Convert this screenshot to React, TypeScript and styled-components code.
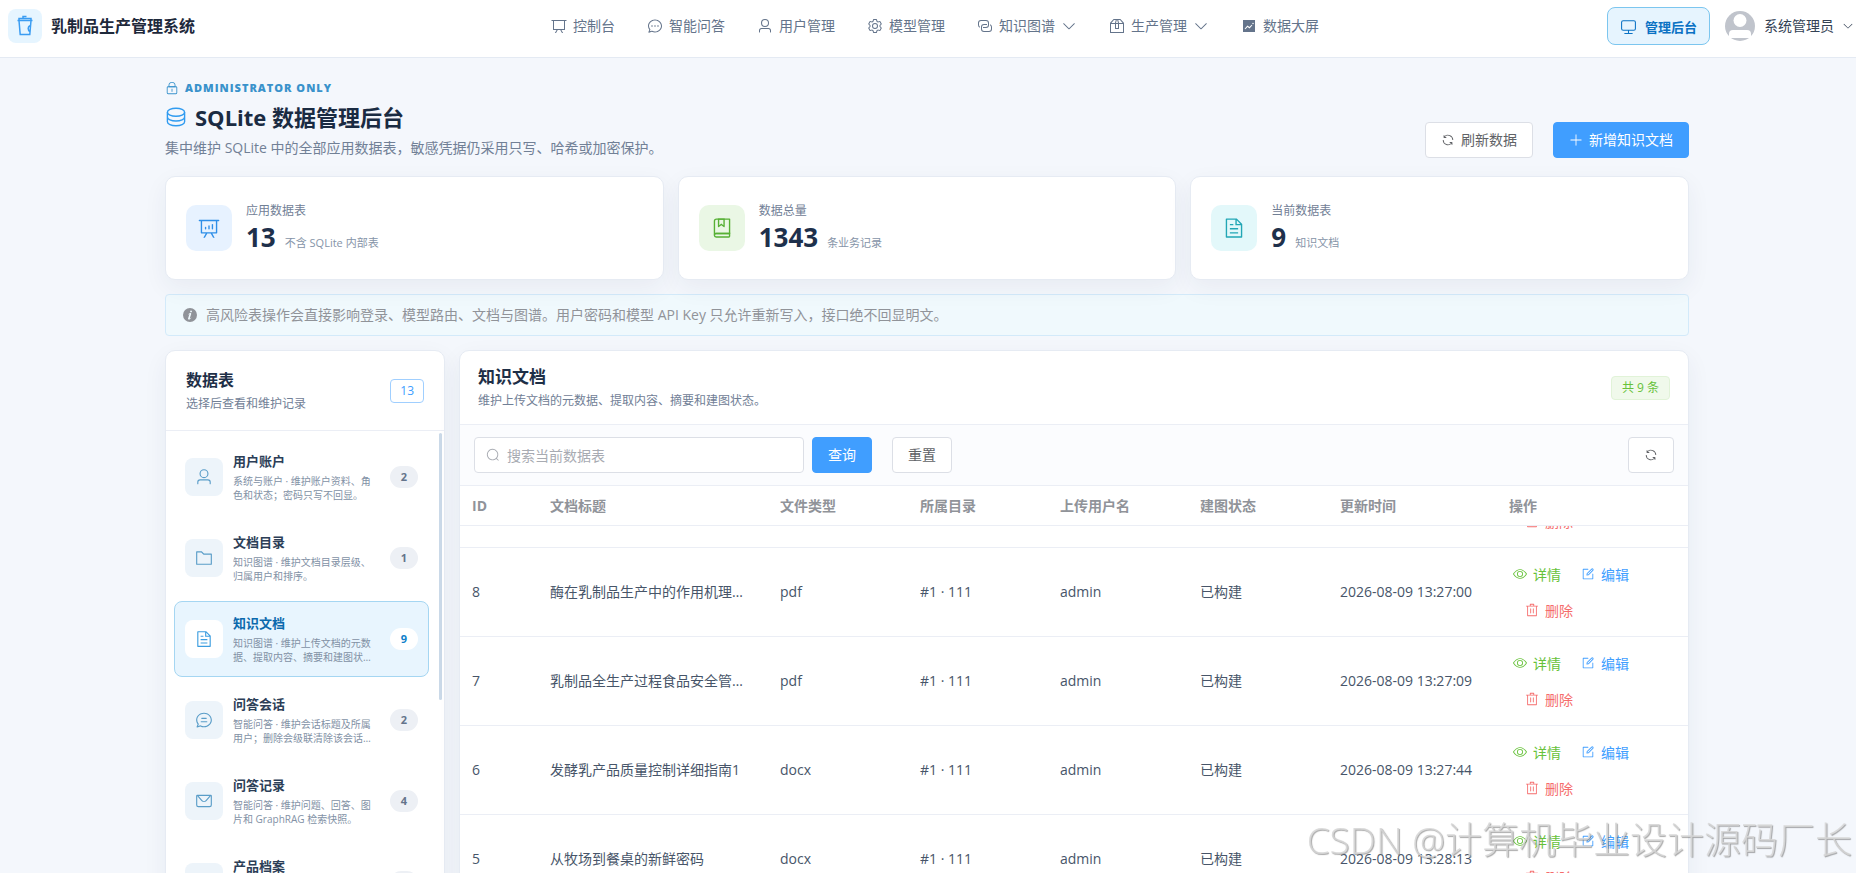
import React, { useLayoutEffect, useRef } from 'react';
import styled, { createGlobalStyle, css } from 'styled-components';

const GlobalStyle = createGlobalStyle`
  *, *::before, *::after { box-sizing: border-box; }
  body {
    margin: 0;
    background: #f4f7fc;
    color: #1f2d3d;
    font-family: "Open Sans", "Noto Sans CJK SC", sans-serif;
    font-size: 14px;
  }
  button, input { font-family: inherit; }
  h1, h2, p { margin: 0; }
`;

/* ---------- icons (1024 grid) ---------- */

const paths = {
  arrowDown: ['M831.872 340.864 512 652.672 192.128 340.864a30.592 30.592 0 0 0-42.752 0 29.12 29.12 0 0 0 0 41.6L489.664 714.24a32 32 0 0 0 44.672 0l340.288-331.712a29.12 29.12 0 0 0 0-41.728 30.592 30.592 0 0 0-42.752 0z'],
  plus: ['M480 480V128a32 32 0 0 1 64 0v352h352a32 32 0 1 1 0 64H544v352a32 32 0 1 1-64 0V544H128a32 32 0 0 1 0-64z'],
  search: ['m795.904 750.72 124.992 124.928a32 32 0 0 1-45.248 45.248L750.656 795.904a416 416 0 1 1 45.248-45.248zM480 832a352 352 0 1 0 0-704 352 352 0 0 0 0 704'],
  refresh: ['M771.776 794.88A384 384 0 0 1 128 512h64a320 320 0 0 0 555.712 216.448H654.72a32 32 0 1 1 0-64h149.056a32 32 0 0 1 32 32v148.928a32 32 0 1 1-64 0v-50.56zM276.288 295.616h92.992a32 32 0 0 1 0 64H220.16a32 32 0 0 1-32-32V178.56a32 32 0 0 1 64 0v50.56A384 384 0 0 1 896.128 512h-64a320 320 0 0 0-555.776-216.384z'],
  trash: ['M160 256H96a32 32 0 0 1 0-64h256V95.936a32 32 0 0 1 32-32h256a32 32 0 0 1 32 32V192h256a32 32 0 1 1 0 64h-64v672a32 32 0 0 1-32 32H192a32 32 0 0 1-32-32zm448-64v-64H416v64zM224 896h576V256H224zm192-128a32 32 0 0 1-32-32V416a32 32 0 0 1 64 0v320a32 32 0 0 1-32 32m192 0a32 32 0 0 1-32-32V416a32 32 0 0 1 64 0v320a32 32 0 0 1-32 32'],
  view: ['M512 160c320 0 512 352 512 352S832 864 512 864 0 512 0 512s192-352 512-352m0 64c-225.28 0-384.128 208.064-436.8 288 52.608 79.872 211.456 288 436.8 288 225.28 0 384.128-208.064 436.8-288-52.608-79.872-211.456-288-436.8-288m0 64a224 224 0 1 1 0 448 224 224 0 0 1 0-448m0 64a160.192 160.192 0 0 0-160 160c0 88.192 71.744 160 160 160s160-71.808 160-160-71.744-160-160-160'],
  edit: [
    'M832 512a32 32 0 1 1 64 0v352a32 32 0 0 1-32 32H160a32 32 0 0 1-32-32V160a32 32 0 0 1 32-32h352a32 32 0 0 1 0 64H192v640h640z',
    'm469.952 554.24 52.8-7.552L847.104 222.4a32 32 0 1 0-45.248-45.248L477.44 501.44l-7.552 52.8zm422.4-422.4a96 96 0 0 1 0 135.808l-331.84 331.84a32 32 0 0 1-18.112 9.088L436.8 623.68a32 32 0 0 1-36.224-36.224l15.104-105.6a32 32 0 0 1 9.024-18.112l331.904-331.84a96 96 0 0 1 135.744 0z',
  ],
  user: ['M512 512a192 192 0 1 0 0-384 192 192 0 0 0 0 384m0 64a256 256 0 1 1 0-512 256 256 0 0 1 0 512m320 320v-96a96 96 0 0 0-96-96H288a96 96 0 0 0-96 96v96a32 32 0 1 1-64 0v-96a160 160 0 0 1 160-160h448a160 160 0 0 1 160 160v96a32 32 0 1 1-64 0'],
  folder: ['M128 192v640h768V320H485.76L357.504 192zm-32-64h287.872l128.384 128H928a32 32 0 0 1 32 32v576a32 32 0 0 1-32 32H96a32 32 0 0 1-32-32V160a32 32 0 0 1 32-32'],
  document: ['M832 384H576V128H192v768h640zm-26.496-64L640 154.496V320zM160 64h480l256 256v608a32 32 0 0 1-32 32H160a32 32 0 0 1-32-32V96a32 32 0 0 1 32-32m160 448h384v64H320zm0-192h160v64H320zm0 384h384v64H320z'],
  message: [
    'M128 224v512a64 64 0 0 0 64 64h640a64 64 0 0 0 64-64V224zm0-64h768a64 64 0 0 1 64 64v512a128 128 0 0 1-128 128H192A128 128 0 0 1 64 736V224a64 64 0 0 1 64-64',
    'M904 224 656.512 506.88a192 192 0 0 1-289.024 0L120 224zm-698.944 0 210.56 240.704a128 128 0 0 0 192.704 0L818.944 224z',
  ],
  lock: [
    'M224 448a32 32 0 0 0-32 32v384a32 32 0 0 0 32 32h576a32 32 0 0 0 32-32V480a32 32 0 0 0-32-32zm0-64h576a96 96 0 0 1 96 96v384a96 96 0 0 1-96 96H224a96 96 0 0 1-96-96V480a96 96 0 0 1 96-96',
    'M512 544a32 32 0 0 1 32 32v192a32 32 0 1 1-64 0V576a32 32 0 0 1 32-32m192-160v-64a192 192 0 1 0-384 0v64zM512 64a256 256 0 0 1 256 256v128H256V320A256 256 0 0 1 512 64',
  ],
  monitor: ['M544 768v128h192a32 32 0 1 1 0 64H288a32 32 0 1 1 0-64h192V768H192A128 128 0 0 1 64 640V256a128 128 0 0 1 128-128h640a128 128 0 0 1 128 128v384a128 128 0 0 1-128 128zM192 192a64 64 0 0 0-64 64v384a64 64 0 0 0 64 64h640a64 64 0 0 0 64-64V256a64 64 0 0 0-64-64z'],
  chatDot: [
    'm174.72 855.68 135.296-45.12 23.68 11.84C388.096 849.536 448.576 864 512 864c211.84 0 384-166.784 384-352S723.84 160 512 160 128 326.784 128 512c0 69.12 24.96 139.264 70.848 199.232l22.08 28.8-46.272 115.584zm-45.248 82.56A32 32 0 0 1 89.6 896l58.368-145.92C94.72 680.32 64 596.864 64 512 64 299.904 256 96 512 96s448 203.904 448 416-192 416-448 416a461.06 461.06 0 0 1-206.912-48.384z',
    'M512 563.2a51.2 51.2 0 1 1 0-102.4 51.2 51.2 0 0 1 0 102.4m192 0a51.2 51.2 0 1 1 0-102.4 51.2 51.2 0 0 1 0 102.4m-384 0a51.2 51.2 0 1 1 0-102.4 51.2 51.2 0 0 1 0 102.4',
  ],
  chatLine: [
    'm174.72 855.68 135.296-45.12 23.68 11.84C388.096 849.536 448.576 864 512 864c211.84 0 384-166.784 384-352S723.84 160 512 160 128 326.784 128 512c0 69.12 24.96 139.264 70.848 199.232l22.08 28.8-46.272 115.584zm-45.248 82.56A32 32 0 0 1 89.6 896l58.368-145.92C94.72 680.32 64 596.864 64 512 64 299.904 256 96 512 96s448 203.904 448 416-192 416-448 416a461.06 461.06 0 0 1-206.912-48.384z',
    'M352 576h320q32 0 32 32t-32 32H352q-32 0-32-32t32-32m32-192h256q32 0 32 32t-32 32H384q-32 0-32-32t32-32',
  ],
  trend: ['M128 896V128h768v768zm291.712-327.296 128 102.4 180.16-201.792-47.744-42.624-139.84 156.608-128-102.4-180.16 201.792 47.744 42.624 139.84-156.608zM816 352a48 48 0 1 0-96 0 48 48 0 0 0 96 0'],
  info: ['M512 64a448 448 0 1 1 0 896.064A448 448 0 0 1 512 64m67.2 275.072c33.28 0 60.288-23.104 60.288-57.344s-27.072-57.344-60.288-57.344c-33.28 0-60.16 23.104-60.16 57.344s26.88 57.344 60.16 57.344M590.912 699.2c0-6.848 2.368-24.64 1.024-34.752l-52.608 60.544c-10.88 11.456-24.512 19.392-30.912 17.28a12.992 12.992 0 0 1-8.256-14.72l87.68-276.992c7.168-35.136-12.544-67.2-54.336-71.296-44.096 0-108.992 44.736-148.48 101.504 0 6.784-1.28 23.68.064 33.792l52.544-60.608c10.88-11.328 23.552-19.328 29.952-17.152a12.8 12.8 0 0 1 7.808 16.128L388.48 728.576c-10.048 32.256 8.96 63.872 55.04 71.04 67.84 0 107.904-43.648 147.456-100.416z'],
  connection: [
    'M640 384v64H448a128 128 0 0 0-128 128v128a128 128 0 0 0 128 128h320a128 128 0 0 0 128-128V576a128 128 0 0 0-64-110.848V394.88c74.56 26.368 128 97.472 128 181.056v128a192 192 0 0 1-192 192H448a192 192 0 0 1-192-192V576a192 192 0 0 1 192-192z',
    'M384 640v-64h192a128 128 0 0 0 128-128V320a128 128 0 0 0-128-128H256a128 128 0 0 0-128 128v128a128 128 0 0 0 64 110.848v70.272A192.06 192.06 0 0 1 64 448V320a192 192 0 0 1 192-192h320a192 192 0 0 1 192 192v128a192 192 0 0 1-192 192z',
  ],
  collection: [
    'M192 736h640V128H256a64 64 0 0 0-64 64zm64-672h608a32 32 0 0 1 32 32v672a32 32 0 0 1-32 32H160l-32 57.536V192A128 128 0 0 1 256 64',
    'M240 800a48 48 0 1 0 0 96h592v-96zm0-64h656v160a64 64 0 0 1-64 64H240a112 112 0 0 1 0-224m144-608v250.88l96-76.8 96 76.8V128zm-64-64h320v381.44a32 32 0 0 1-51.968 24.96L480 384l-108.032 86.4A32 32 0 0 1 320 445.44z',
  ],
  analysis: ['m665.216 768 110.848 192h-73.856L591.36 768H433.024L322.176 960H248.32l110.848-192H160a32 32 0 0 1-32-32V192H64a32 32 0 0 1 0-64h896a32 32 0 1 1 0 64h-64v544a32 32 0 0 1-32 32zM832 192H192v512h640zM352 448a32 32 0 0 1 32 32v64a32 32 0 0 1-64 0v-64a32 32 0 0 1 32-32m160-64a32 32 0 0 1 32 32v128a32 32 0 0 1-64 0V416a32 32 0 0 1 32-32m160-64a32 32 0 0 1 32 32v192a32 32 0 1 1-64 0V352a32 32 0 0 1 32-32'],
  board: [
    'M32 128h960v64H32z',
    'M192 192v512h640V192zm-64-64h768v608a32 32 0 0 1-32 32H160a32 32 0 0 1-32-32z',
    'M322.176 960H248.32l144.64-250.56 55.424 32zm453.888 0h-73.856L576 741.44l55.424-32z',
  ],
  box: [
    'M317.056 128 128 344.064V896h768V344.064L706.944 128zm-14.528-64h418.944a32 32 0 0 1 24.064 10.88l206.528 236.096A32 32 0 0 1 960 332.032V928a32 32 0 0 1-32 32H96a32 32 0 0 1-32-32V332.032a32 32 0 0 1 7.936-21.12L278.4 75.008A32 32 0 0 1 302.528 64z',
    'M64 320h896v64H64z',
    'M448 327.872V640h128V327.872L526.08 128h-28.16zM448 64h128l64 256v352a32 32 0 0 1-32 32H416a32 32 0 0 1-32-32V320z',
  ],
  setting: ['M600.704 64a32 32 0 0 1 30.464 22.208l35.2 109.376c14.784 7.232 28.928 15.36 42.432 24.512l112.384-24.192a32 32 0 0 1 34.432 15.36L944.32 364.8a32 32 0 0 1-4.032 37.504l-77.12 85.12a357.12 357.12 0 0 1 0 49.024l77.12 85.248a32 32 0 0 1 4.032 37.504l-88.704 153.6a32 32 0 0 1-34.432 15.296L708.8 803.904c-13.44 9.088-27.648 17.28-42.368 24.512l-35.264 109.376A32 32 0 0 1 600.704 960H423.296a32 32 0 0 1-30.464-22.208L357.696 828.48a351.616 351.616 0 0 1-42.56-24.64l-112.32 24.256a32 32 0 0 1-34.432-15.36L79.68 659.2a32 32 0 0 1 4.032-37.504l77.12-85.248a357.12 357.12 0 0 1 0-48.896l-77.12-85.248A32 32 0 0 1 79.68 364.8l88.704-153.6a32 32 0 0 1 34.432-15.296l112.32 24.256c13.568-9.152 27.776-17.408 42.56-24.64l35.2-109.312A32 32 0 0 1 423.232 64H600.64zm-23.424 64H446.72l-36.352 113.088-24.512 11.968a294.113 294.113 0 0 0-34.816 20.096l-22.656 15.36-116.224-25.088-65.28 113.152 79.68 88.192-1.92 27.136a293.12 293.12 0 0 0 0 40.192l1.92 27.136-79.808 88.192 65.344 113.152 116.224-25.024 22.656 15.296a294.113 294.113 0 0 0 34.816 20.096l24.512 11.968L446.72 896h130.688l36.48-113.152 24.448-11.904a288.282 288.282 0 0 0 34.752-20.096l22.592-15.296 116.288 25.024 65.28-113.152-79.744-88.192 1.92-27.136a293.12 293.12 0 0 0 0-40.256l-1.92-27.136 79.808-88.128-65.344-113.152-116.288 24.96-22.592-15.232a287.616 287.616 0 0 0-34.752-20.096l-24.448-11.904L577.344 128zM512 320a192 192 0 1 1 0 384 192 192 0 0 1 0-384m0 64a128 128 0 1 0 0 256 128 128 0 0 0 0-256'],
};

type IconName = keyof typeof paths;

const IconSvg = styled.svg<{ $size: number }>`
  width: ${(p) => p.$size}px;
  height: ${(p) => p.$size}px;
  flex: none;
  display: block;
`;

function Icon({ name, size = 14 }: { name: IconName; size?: number }) {
  return (
    <IconSvg $size={size} viewBox="0 0 1024 1024" fill="currentColor" aria-hidden="true">
      {paths[name].map((d) => <path key={d} d={d} />)}
    </IconSvg>
  );
}

function DatabaseIcon() {
  return (
    <IconSvg $size={22} viewBox="0 0 22 22" fill="none" stroke="#2f9bf0" strokeWidth="1.400" aria-hidden="true">
      <ellipse cx="11" cy="6.200" rx="8.600" ry="4" />
      <path d="M2.400 6.200v9.600c0 2.200 3.800 4 8.600 4s8.600-1.800 8.600-4V6.200 M2.400 11c0 2.200 3.800 4 8.600 4s8.600-1.800 8.600-4" />
    </IconSvg>
  );
}

function CupIcon() {
  return (
    <IconSvg $size={22} viewBox="0 0 22 22" fill="none" stroke="#3b9df2" strokeWidth="1.500" aria-hidden="true">
      <path d="M3.500 5.500h15 M5 5.500 6.200 19.500h9.600L17 5.500 M5 5.500V3.500h12v2 M9 3.500V1.500h3.500 M15.800 10.500a3.600 3.600 0 0 0 0 6" />
    </IconSvg>
  );
}

/* ---------- top bar ---------- */

const Shell = styled.div`
  height: 100vh;
  display: flex;
  flex-direction: column;
  overflow: hidden;
`;

const TopBar = styled.header`
  flex: none;
  display: flex;
  align-items: center;
  padding: 7px 2px 12px 8px;
  background: #fff;
  border-bottom: 1px solid #e4eaf3;
`;

const Side = styled.div<{ $end?: boolean }>`
  flex: 1;
  display: flex;
  align-items: center;
  justify-content: ${(p) => (p.$end ? 'flex-end' : 'flex-start')};
`;

const LogoBox = styled.span`
  display: flex;
  align-items: center;
  justify-content: center;
  width: 34px;
  height: 34px;
  margin-right: 9px;
  border-radius: 8px;
  background: #e6f5ff;
`;

const Brand = styled.strong`
  font-size: 16px;
  line-height: 24px;
  color: #1e293b;
`;

const Nav = styled.nav`
  display: flex;
  align-items: center;
  gap: 32px;
  padding-left: 8px;
`;

const NavLink = styled.a`
  display: flex;
  align-items: center;
  gap: 6px;
  color: #64748b;
  font-size: 14px;
  line-height: 20px;
  text-decoration: none;
`;

const AdminButton = styled.button`
  display: flex;
  align-items: center;
  gap: 8px;
  height: 38px;
  padding: 0 12px;
  border: 1px solid #7cc6ef;
  border-radius: 8px;
  background: #e6f4fe;
  color: #0b72c4;
  font-size: 13px;
  font-weight: 700;
`;

const Avatar = styled.svg`
  width: 30px;
  height: 30px;
  margin: 0 9px 0 15px;
`;

const AccountButton = styled.button`
  display: flex;
  align-items: center;
  gap: 8px;
  padding: 0;
  border: 0;
  background: none;
  color: #334155;
  font-size: 14px;
  line-height: 20px;
`;

/* ---------- page ---------- */

const Main = styled.main`
  flex: 1;
  min-height: 0;
  overflow-y: auto;
  scrollbar-width: none;
  padding: 22px 24px 24px 22px;
`;

const Container = styled.div`
  max-width: 1524px;
  margin: 0 auto;
`;

const Hero = styled.section`
  display: flex;
  align-items: flex-end;
  justify-content: space-between;
  margin-bottom: 18px;
`;

const Eyebrow = styled.p`
  display: flex;
  align-items: center;
  gap: 6px;
  color: #3992cb;
  font-size: 11px;
  font-weight: 800;
  line-height: 16px;
  letter-spacing: 1px;
`;

const PageTitle = styled.h1`
  display: flex;
  align-items: center;
  gap: 8px;
  margin: 6px 0;
  color: #1a2b42;
  font-size: 22px;
  font-weight: 700;
  line-height: 30px;
`;

const Lead = styled.p`
  color: #718096;
  font-size: 14px;
  line-height: 20px;
`;

const Actions = styled.div`
  display: flex;
  gap: 20px;
`;

const Button = styled.button<{ $primary?: boolean }>`
  display: inline-flex;
  align-items: center;
  justify-content: center;
  gap: 6px;
  height: 36px;
  padding: 0 15px;
  border: 1px solid ${(p) => (p.$primary ? '#409eff' : '#dcdfe6')};
  border-radius: 4px;
  background: ${(p) => (p.$primary ? '#409eff' : '#fff')};
  color: ${(p) => (p.$primary ? '#fff' : '#606266')};
  font-size: 14px;
  line-height: 20px;
  flex: none;
`;

const surface = css`
  border: 1px solid #e6ebf3;
  border-radius: 10px;
  background: #fff;
  box-shadow: 0 8px 24px rgba(31, 50, 81, 0.06);
`;

const Stats = styled.section`
  display: grid;
  grid-template-columns: repeat(3, 1fr);
  gap: 14px;
`;

const StatCard = styled.article`
  ${surface}
  display: flex;
  align-items: center;
  gap: 14px;
  height: 104px;
  padding: 0 20px;
`;

const StatIcon = styled.span<{ $bg: string; $fg: string }>`
  display: flex;
  align-items: center;
  justify-content: center;
  width: 46px;
  height: 46px;
  border-radius: 10px;
  background: ${(p) => p.$bg};
  color: ${(p) => p.$fg};
`;

const StatLabel = styled.p`
  color: #718096;
  font-size: 12px;
  line-height: 18px;
`;

const StatLine = styled.p`
  display: flex;
  align-items: baseline;
  gap: 9px;
  color: #1e304b;
  line-height: 34px;
  strong { font-size: 26px; }
  small { color: #8694a8; font-size: 11px; line-height: 16px; }
`;

const Notice = styled.div`
  display: flex;
  align-items: center;
  gap: 8px;
  height: 42px;
  margin: 14px 0;
  padding: 0 16px;
  border: 1px solid #d3eafa;
  border-radius: 4px;
  background: #f0f9fd;
  color: #909399;
  font-size: 14px;
  line-height: 20px;
`;

const Workspace = styled.div`
  display: grid;
  grid-template-columns: 280px minmax(0, 1fr);
  align-items: start;
  gap: 14px;
`;

const Panel = styled.section`
  ${surface}
  position: relative;
  overflow: hidden;
`;

const PanelHead = styled.header<{ $tall?: boolean }>`
  display: flex;
  align-items: center;
  justify-content: space-between;
  height: ${(p) => (p.$tall ? 80 : 74)}px;
  padding: 0 ${(p) => (p.$tall ? 20 : 18)}px;
  border-bottom: 1px solid #ebeef5;
`;

const PanelTitle = styled.h2<{ $large?: boolean }>`
  color: #1e2f47;
  font-size: ${(p) => (p.$large ? 17 : 16)}px;
  line-height: 24px;
`;

const PanelNote = styled.p`
  margin-top: 2px;
  color: #718096;
  font-size: 12px;
  line-height: 20px;
`;

const Tag = styled.span<{ $tone: 'blue' | 'green' }>`
  height: 24px;
  padding: 0 ${(p) => (p.$tone === 'blue' ? 9 : 10)}px;
  border: 1px solid ${(p) => (p.$tone === 'blue' ? '#a0cfff' : '#e1f3d8')};
  border-radius: 4px;
  background: ${(p) => (p.$tone === 'blue' ? '#fff' : '#f0f9eb')};
  color: ${(p) => (p.$tone === 'blue' ? '#409eff' : '#67c23a')};
  font-size: 12px;
  line-height: 22px;
`;

const SourceList = styled.ul`
  display: flex;
  flex-direction: column;
  gap: 5px;
  height: 530px;
  margin: 0;
  padding: 8px 15px 8px 8px;
  overflow: hidden;
  list-style: none;
`;

const ScrollThumb = styled.span`
  position: absolute;
  top: 82px;
  right: 2px;
  width: 3px;
  height: 267px;
  border-radius: 2px;
  background: #cad9e8;
`;

const SourceIcon = styled.span`
  display: flex;
  align-items: center;
  justify-content: center;
  width: 38px;
  height: 38px;
  border-radius: 8px;
  background: #edf4fa;
  color: #5a9dc8;
  flex: none;
`;

const SourceText = styled.span`
  flex: 1;
  min-width: 0;
`;

const SourceName = styled.strong`
  display: block;
  margin-bottom: 4px;
  color: #2c3e57;
  font-size: 13px;
  line-height: 18px;
`;

const SourceDesc = styled.span`
  display: -webkit-box;
  -webkit-box-orient: vertical;
  -webkit-line-clamp: 2;
  min-height: 28px;
  overflow: hidden;
  color: #8291a5;
  font-size: 10px;
  line-height: 14px;
`;

const Count = styled.span`
  width: 28px;
  border-radius: 11px;
  background: #edf0f5;
  color: #64748b;
  font-size: 11px;
  font-weight: 700;
  line-height: 22px;
  text-align: center;
  flex: none;
`;

const SourceItem = styled.button<{ $active?: boolean }>`
  display: flex;
  align-items: center;
  gap: 10px;
  width: 100%;
  height: 76px;
  padding: 0 10px;
  border: 1px solid ${(p) => (p.$active ? '#a5d6f2' : 'transparent')};
  border-radius: 8px;
  background: ${(p) => (p.$active ? '#e8f5fe' : 'transparent')};
  text-align: left;
  ${(p) => p.$active && css`
    ${SourceIcon} { background: #fff; color: #3b9de0; }
    ${SourceName} { color: #0b69ad; }
    ${Count} { background: #fff; color: #0f7fcb; }
  `}
`;

const Toolbar = styled.form`
  display: flex;
  align-items: center;
  gap: 20px;
  height: 61px;
  padding: 0 14px;
  border-bottom: 1px solid #ebeef5;
  background: #fbfcfe;
`;

const SearchGroup = styled.div`
  display: flex;
  gap: 8px;
`;

const SearchBox = styled.label`
  display: flex;
  align-items: center;
  gap: 7px;
  width: 330px;
  height: 36px;
  padding: 0 11px;
  border: 1px solid #dcdfe6;
  border-radius: 4px;
  background: #fff;
  color: #a8abb2;
`;

const SearchInput = styled.input`
  flex: 1;
  min-width: 0;
  padding: 0;
  border: 0;
  outline: 0;
  background: none;
  color: #606266;
  font-size: 14px;
  &::placeholder { color: #a8abb2; }
`;

const IconButton = styled(Button)`
  margin-left: auto;
`;

const Table = styled.table`
  display: block;
  font-size: 14px;
  line-height: 20px;
  thead { display: block; }
`;

const TableBody = styled.tbody`
  display: block;
  height: 378px;
  overflow-y: auto;
  scrollbar-width: none;
`;

const Row = styled.tr<{ $head?: boolean }>`
  display: grid;
  grid-template-columns: 78px 230px repeat(4, 140px) 169px minmax(0, 1fr);
  align-items: center;
  height: ${(p) => (p.$head ? 40 : 89)}px;
  border-bottom: 1px solid #ebeef5;
`;

const HeadCell = styled.th`
  padding: 0 12px;
  color: #909399;
  font-weight: 700;
  text-align: left;
`;

const Cell = styled.td`
  padding: 0 12px;
  color: #475569;
  overflow: hidden;
  text-overflow: ellipsis;
  white-space: nowrap;
`;

const RowActions = styled.div`
  display: flex;
  flex-wrap: wrap;
`;

const LinkButton = styled.button<{ $color: string }>`
  display: flex;
  align-items: center;
  gap: 6px;
  height: 36px;
  padding: 0 4px;
  border: 0;
  background: none;
  color: ${(p) => p.$color};
  font-size: 14px;
  & + & { margin-left: 12px; }
`;

const Watermark = styled.div`
  position: fixed;
  right: 4px;
  bottom: 8px;
  color: rgba(214, 214, 214, 0.85);
  font-size: 37px;
  font-weight: 300;
  line-height: 50px;
  text-shadow: 1px 1px 1px rgba(110, 110, 110, 0.6);
  white-space: nowrap;
  pointer-events: none;
`;

/* ---------- data ---------- */

const navItems: { label: string; icon: IconName; menu?: boolean }[] = [
  { label: '控制台', icon: 'board' },
  { label: '智能问答', icon: 'chatDot' },
  { label: '用户管理', icon: 'user' },
  { label: '模型管理', icon: 'setting' },
  { label: '知识图谱', icon: 'connection', menu: true },
  { label: '生产管理', icon: 'box', menu: true },
  { label: '数据大屏', icon: 'trend' },
];

const stats: { label: string; value: string; note: string; icon: IconName; bg: string; fg: string }[] = [
  { label: '应用数据表', value: '13', note: '不含 SQLite 内部表', icon: 'analysis', bg: '#e7f2ff', fg: '#2f8fe8' },
  { label: '数据总量', value: '1343', note: '条业务记录', icon: 'collection', bg: '#eaf7e5', fg: '#57b035' },
  { label: '当前数据表', value: '9', note: '知识文档', icon: 'document', bg: '#e3f8fa', fg: '#22a6b5' },
];

const sources: { name: string; desc: string; icon: IconName; count: number }[] = [
  { name: '用户账户', desc: '系统与账户 · 维护账户资料、角色和状态；密码只写不回显。', icon: 'user', count: 2 },
  { name: '文档目录', desc: '知识图谱 · 维护文档目录层级、归属用户和排序。', icon: 'folder', count: 1 },
  { name: '知识文档', desc: '知识图谱 · 维护上传文档的元数据、提取内容、摘要和建图状态。', icon: 'document', count: 9 },
  { name: '问答会话', desc: '智能问答 · 维护会话标题及所属用户；删除会级联清除该会话的记录。', icon: 'chatLine', count: 2 },
  { name: '问答记录', desc: '智能问答 · 维护问题、回答、图片和 GraphRAG 检索快照。', icon: 'message', count: 4 },
  { name: '产品档案', desc: '', icon: 'collection', count: 6 },
];

const columns = ['ID', '文档标题', '文件类型', '所属目录', '上传用户名', '建图状态', '更新时间', '操作'];

const rows = [
  { id: 9, title: '知识文档', type: 'pdf', time: '2026-08-09 13:26:00' },
  { id: 8, title: '酶在乳制品生产中的作用机理与应用', type: 'pdf', time: '2026-08-09 13:27:00' },
  { id: 7, title: '乳制品全生产过程食品安全管理规范', type: 'pdf', time: '2026-08-09 13:27:09' },
  { id: 6, title: '发酵乳产品质量控制详细指南1', type: 'docx', time: '2026-08-09 13:27:44' },
  { id: 5, title: '从牧场到餐桌的新鲜密码', type: 'docx', time: '2026-08-09 13:28:13' },
];

function DataTable() {
  const body = useRef<HTMLTableSectionElement>(null);

  // Open with the newest row mostly scrolled out of the list.
  useLayoutEffect(() => {
    if (body.current) body.current.scrollTop = 67;
  }, []);

  return (
    <Table>
      <thead>
        <Row $head>
          {columns.map((c) => <HeadCell key={c} scope="col">{c}</HeadCell>)}
        </Row>
      </thead>
      <TableBody ref={body}>
        {rows.map((r) => (
          <Row key={r.id}>
            <Cell>{r.id}</Cell>
            <Cell>{r.title}</Cell>
            <Cell>{r.type}</Cell>
            <Cell>#1 · 111</Cell>
            <Cell>admin</Cell>
            <Cell>已构建</Cell>
            <Cell>{r.time}</Cell>
            <Cell>
              <RowActions>
                <LinkButton $color="#67c23a" type="button"><Icon name="view" />详情</LinkButton>
                <LinkButton $color="#409eff" type="button"><Icon name="edit" />编辑</LinkButton>
                <LinkButton $color="#f56c6c" type="button"><Icon name="trash" />删除</LinkButton>
              </RowActions>
            </Cell>
          </Row>
        ))}
      </TableBody>
    </Table>
  );
}

export default function App() {
  return (
    <Shell>
      <GlobalStyle />
      <TopBar>
        <Side>
          <LogoBox><CupIcon /></LogoBox>
          <Brand>乳制品生产管理系统</Brand>
        </Side>
        <Nav>
          {navItems.map((item) => (
            <NavLink key={item.label} href="#">
              <Icon name={item.icon} size={16} />
              {item.label}
              {item.menu && <Icon name="arrowDown" size={16} />}
            </NavLink>
          ))}
        </Nav>
        <Side $end>
          <AdminButton type="button"><Icon name="monitor" size={17} />管理后台</AdminButton>
          <Avatar viewBox="0 0 30 30" aria-hidden="true">
            <circle cx="15" cy="15" r="15" fill="#c0c4cc" />
            <circle cx="15" cy="9.500" r="6.500" fill="#fff" />
            <path d="M4 27v-4a4 4 0 0 1 4-4h14a4 4 0 0 1 4 4v4z" fill="#fff" />
          </Avatar>
          <AccountButton type="button">系统管理员<Icon name="arrowDown" size={12} /></AccountButton>
        </Side>
      </TopBar>

      <Main>
        <Container>
          <Hero>
            <div>
              <Eyebrow><Icon name="lock" size={14} />ADMINISTRATOR ONLY</Eyebrow>
              <PageTitle><DatabaseIcon />SQLite 数据管理后台</PageTitle>
              <Lead>集中维护 SQLite 中的全部应用数据表，敏感凭据仍采用只写、哈希或加密保护。</Lead>
            </div>
            <Actions>
              <Button type="button"><Icon name="refresh" />刷新数据</Button>
              <Button type="button" $primary><Icon name="plus" />新增知识文档</Button>
            </Actions>
          </Hero>

          <Stats>
            {stats.map((s) => (
              <StatCard key={s.label}>
                <StatIcon $bg={s.bg} $fg={s.fg}><Icon name={s.icon} size={22} /></StatIcon>
                <div>
                  <StatLabel>{s.label}</StatLabel>
                  <StatLine><strong>{s.value}</strong><small>{s.note}</small></StatLine>
                </div>
              </StatCard>
            ))}
          </Stats>

          <Notice role="note">
            <Icon name="info" size={16} />
            高风险表操作会直接影响登录、模型路由、文档与图谱。用户密码和模型 API Key 只允许重新写入，接口绝不回显明文。
          </Notice>

          <Workspace>
            <Panel>
              <PanelHead $tall>
                <div>
                  <PanelTitle>数据表</PanelTitle>
                  <PanelNote>选择后查看和维护记录</PanelNote>
                </div>
                <Tag $tone="blue">13</Tag>
              </PanelHead>
              <SourceList>
                {sources.map((s) => (
                  <li key={s.name}>
                    <SourceItem type="button" $active={s.name === '知识文档'}>
                      <SourceIcon><Icon name={s.icon} size={18} /></SourceIcon>
                      <SourceText>
                        <SourceName>{s.name}</SourceName>
                        <SourceDesc>{s.desc}</SourceDesc>
                      </SourceText>
                      <Count>{s.count}</Count>
                    </SourceItem>
                  </li>
                ))}
              </SourceList>
              <ScrollThumb />
            </Panel>

            <Panel>
              <PanelHead>
                <div>
                  <PanelTitle $large>知识文档</PanelTitle>
                  <PanelNote>维护上传文档的元数据、提取内容、摘要和建图状态。</PanelNote>
                </div>
                <Tag $tone="green">共 9 条</Tag>
              </PanelHead>
              <Toolbar onSubmit={(e) => e.preventDefault()}>
                <SearchGroup>
                  <SearchBox>
                    <Icon name="search" />
                    <SearchInput type="text" placeholder="搜索当前数据表" aria-label="搜索当前数据表" />
                  </SearchBox>
                  <Button type="submit" $primary>查询</Button>
                </SearchGroup>
                <Button type="reset">重置</Button>
                <IconButton type="button" aria-label="刷新"><Icon name="refresh" /></IconButton>
              </Toolbar>
              <DataTable />
            </Panel>
          </Workspace>
        </Container>
      </Main>

      <Watermark>CSDN @计算机毕业设计源码厂长</Watermark>
    </Shell>
  );
}
